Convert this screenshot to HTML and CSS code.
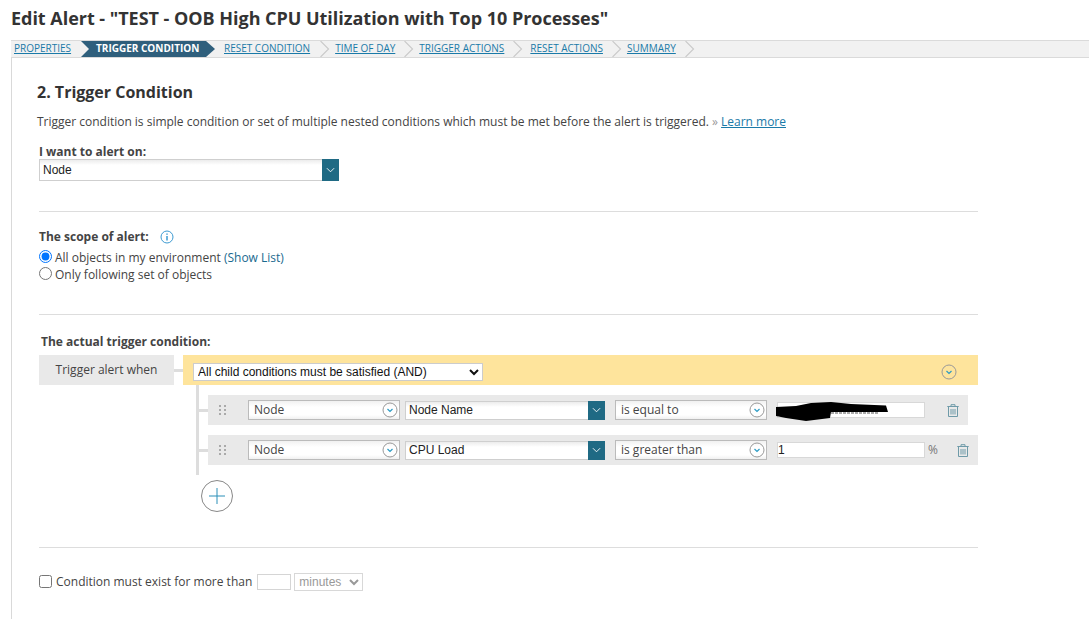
FILE: index.html
```html
<!DOCTYPE html>
<html lang="en">
<head>
<meta charset="utf-8">
<title>Edit Alert</title>
<link rel="stylesheet" href="styles.css">
</head>
<body>
<h1 class="title">Edit Alert - "TEST - OOB High CPU Utilization with Top 10 Processes"</h1>
<nav class="tabs">
  <a class="tab first">PROPERTIES</a>
  <span class="tab active">TRIGGER CONDITION</span>
  <a class="tab w-reset">RESET CONDITION</a><svg class="chev" viewBox="0 0 10 18"><path d="M0 0l9 9-9 9" /></svg>
  <a class="tab w-time">TIME OF DAY</a><svg class="chev" viewBox="0 0 10 18"><path d="M0 0l9 9-9 9" /></svg>
  <a class="tab w-ta">TRIGGER ACTIONS</a><svg class="chev" viewBox="0 0 10 18"><path d="M0 0l9 9-9 9" /></svg>
  <a class="tab w-ra">RESET ACTIONS</a><svg class="chev" viewBox="0 0 10 18"><path d="M0 0l9 9-9 9" /></svg>
  <a class="tab w-sum">SUMMARY</a><svg class="chev" viewBox="0 0 10 18"><path d="M0 0l9 9-9 9" /></svg>
</nav>
<main class="content">
  <h2 class="step">2. Trigger Condition</h2>
  <p class="desc">Trigger condition is simple condition or set of multiple nested conditions which must be met before the alert is triggered. <span class="raquo">»</span> <a class="link">Learn more</a></p>
  <div class="block">
    <label class="strong alert-label">I want to alert on:</label>
    <div class="combo combo-main"><span class="combo-text">Node</span><span class="combo-btn"><svg viewBox="0 0 10 6"><path d="M1 1l4 4 4-4"/></svg></span></div>
  </div>
  <hr class="rule rule-1">
  <div class="scope-head"><span class="strong">The scope of alert:</span>
    <svg class="info" viewBox="0 0 14 14"><circle cx="7" cy="7" r="6"/><path d="M7 6v4.5M7 3.4v1.4"/></svg>
  </div>
  <div class="radio-row"><input type="radio" name="scope" class="radio" checked><span>All objects in my environment <a class="show">(Show List)</a></span></div>
  <div class="radio-row"><input type="radio" name="scope" class="radio"><span>Only following set of objects</span></div>
  <hr class="rule rule-2">
  <div class="strong actual">The actual trigger condition:</div>
  <section class="builder">
    <div class="when-row">
      <div class="when">Trigger alert when</div>
      <div class="connector"></div>
      <div class="group-bar">
        <select class="and-select"><option>All child conditions must be satisfied (AND)</option></select>
        <svg class="circle-ico group-ico" viewBox="0 0 16 16"><circle cx="8" cy="8" r="7"/><path d="M5.5 7l2.5 2.5L10.500 7"/></svg>
      </div>
    </div>
    <div class="children">
      <div class="cond cond-short">
        <span class="branch"></span>
        <svg class="grip" viewBox="0 0 7 10"><path d="M0 0h2v2H0zM5 0h2v2H5zM0 4h2v2H0zM5 4h2v2H5zM0 8h2v2H0zM5 8h2v2H5z"/></svg>
        <div class="pick pick-obj"><span>Node</span><svg class="circle-ico" viewBox="0 0 16 16"><circle cx="8" cy="8" r="7"/><path d="M5.500 7l2.500 2.500L10.500 7"/></svg></div>
        <div class="combo combo-field"><span class="combo-text">Node Name</span><span class="combo-btn"><svg viewBox="0 0 10 6"><path d="M1 1l4 4 4-4"/></svg></span></div>
        <div class="pick pick-op"><span>is equal to</span><svg class="circle-ico" viewBox="0 0 16 16"><circle cx="8" cy="8" r="7"/><path d="M5.500 7l2.500 2.500L10.500 7"/></svg></div>
        <div class="value-wrap">
          <input class="value" type="text" value="">
          <svg class="blot" viewBox="0 0 112 19"><path class="blot-trace" d="M55 11H102"/><path d="M0 5L20 4L35 1L55 0L75 2L110 3.500L112 10L55 10L54 16L30 19L10 16L0 14Z"/></svg>
        </div>
        <svg class="trash trash-a" viewBox="0 0 12 13"><path d="M4 2V.7h4V2M.3 2.500h11.400M1.500 2.500v10h9v-10M4 5v5.500M6 5v5.500M8 5v5.500"/></svg>
      </div>
      <div class="cond">
        <span class="branch"></span>
        <svg class="grip" viewBox="0 0 7 10"><path d="M0 0h2v2H0zM5 0h2v2H5zM0 4h2v2H0zM5 4h2v2H5zM0 8h2v2H0zM5 8h2v2H5z"/></svg>
        <div class="pick pick-obj"><span>Node</span><svg class="circle-ico" viewBox="0 0 16 16"><circle cx="8" cy="8" r="7"/><path d="M5.500 7l2.500 2.500L10.500 7"/></svg></div>
        <div class="combo combo-field"><span class="combo-text">CPU Load</span><span class="combo-btn"><svg viewBox="0 0 10 6"><path d="M1 1l4 4 4-4"/></svg></span></div>
        <div class="pick pick-op"><span>is greater than</span><svg class="circle-ico" viewBox="0 0 16 16"><circle cx="8" cy="8" r="7"/><path d="M5.500 7l2.500 2.500L10.500 7"/></svg></div>
        <div class="value-wrap"><input class="value" type="text" value="1"></div>
        <span class="unit">%</span>
        <svg class="trash trash-b" viewBox="0 0 12 13"><path d="M4 2V.7h4V2M.3 2.500h11.400M1.500 2.500v10h9v-10M4 5v5.500M6 5v5.500M8 5v5.500"/></svg>
      </div>
    </div>
    <button class="add" type="button" aria-label="Add"><svg viewBox="0 0 16 16"><path d="M8 0v16M0 8h16"/></svg></button>
  </section>
  <hr class="rule rule-3">
  <div class="exist">
    <input type="checkbox" class="check">
    <span>Condition must exist for more than</span>
    <input type="text" class="mins" disabled>
    <select class="unit-select" disabled><option>minutes</option></select>
  </div>
</main>
</body>
</html>
```

FILE: styles.css
```css
* { box-sizing: border-box; }
html, body { margin: 0; height: 100%; overflow: hidden; background: #fff; }
body { font: 12px/16px "Open Sans", sans-serif; color: #444; }
.title { margin: 0; height: 40px; padding: 5px 0 0 11px; font: 700 18px/26px "Open Sans", sans-serif; letter-spacing: -0.03px; color: #333; white-space: nowrap; }
.tabs { display: flex; align-items: stretch; height: 18px; margin-left: 11px; background: #f1f1f1; border-top: 1px solid #dadada; border-bottom: 1px solid #dadada; font-size: 10px; line-height: 15px; }
.tab { display: block; color: #1a7aa8; text-decoration: underline; white-space: nowrap; }
.first { padding-left: 3px; width: 70px; }
.active { width: 134px; margin-right: 9px; padding-left: 15px; color: #fff; font-weight: 700; text-decoration: none; background: #2f5f7c; clip-path: polygon(0 0, 125px 0, 134px 50%, 125px 100%, 0 100%, 8px 50%); }
.w-reset { margin-right: 10px; }
.w-time { margin-left: 5px; margin-right: 9px; }
.w-ta { margin-left: 5px; margin-right: 9px; }
.w-ra { margin-left: 7px; margin-right: 9px; }
.w-sum { margin-left: 5px; margin-right: 9px; }
.chev { width: 10px; height: 16px; flex: none; }
.chev path { fill: none; stroke: #c8c8c8; stroke-width: 1.200; }
.content { margin-left: 11px; height: 561px; padding: 0 0 0 27px; border-left: 1px solid #d9d9d9; width: 967px; }
.step { height: 54px; margin: 0 0 0 -2px; padding-top: 23px; font: 700 16px/22px "Open Sans", sans-serif; color: #333; }
.desc { margin: 0 0 0 -2px; height: 21px; white-space: nowrap; font-size: 12px; line-height: 20px; letter-spacing: -0.01px; }
.raquo { color: #999; }
.link { color: #1a7aa8; text-decoration: underline; }
.strong { font-weight: 700; color: #444; }
.alert-label { display: block; height: 16px; line-height: 16px; margin-top: 11px; }
.combo { display: flex; align-items: center; height: 21px; background: linear-gradient(#ececec, #fff 5px); border: 1px solid #cfcfcf; border-right: 0; font: 12px "Liberation Sans", sans-serif; color: #222; }
.combo-main { width: 300px; height: 22px; margin-top: -1px; }
.combo-text { flex: 1; padding-left: 3px; }
.combo-btn { display: flex; align-items: center; justify-content: center; width: 17px; align-self: stretch; margin: -1px 0; background: #1f6a84; }
.combo-btn svg { width: 9px; height: 6px; }
.combo-btn path { fill: none; stroke: #fff; stroke-width: 1; }
.rule { height: 1px; margin: 0; border: 0; background: #ddd; width: 939px; }
.rule-1 { margin-top: 30px; }
.scope-head { display: flex; align-items: center; gap: 11px; margin-top: 17px; height: 16px; }
.info { width: 14px; height: 14px; }
.info circle { fill: none; stroke: #3d9bd2; stroke-width: 1; }
.info path { fill: none; stroke: #3d9bd2; stroke-width: 1.500; }
.radio-row { display: flex; align-items: center; height: 17px; white-space: nowrap; }
.scope-head + .radio-row { margin-top: 4px; }
.radio { margin: 0 3px 0 0; width: 13px; height: 13px; position: relative; top: -1px; }
.show { color: #1a6a8f; }
.rule-2 { margin-top: 31px; }
.actual { margin: 19px 0 0 2px; height: 21px; line-height: 16px; }
.builder { width: 939px; }
.when-row { display: flex; align-items: stretch; height: 30px; }
.when { width: 135px; background: #e9e9e9; text-align: center; line-height: 30px; }
.connector { width: 9px; height: 3px; align-self: center; background: #ddd; }
.group-bar { flex: 1; display: flex; align-items: center; justify-content: space-between; padding: 3px 21px 0 10px; background: #fee49c; }
.and-select { width: 290px; height: 18px; padding: 0; border: 1px solid #ccc; background: #fff; font: 12px "Liberation Sans", sans-serif; color: #111; }
.circle-ico { width: 16px; height: 16px; flex: none; }
.circle-ico circle { fill: #fff0; stroke: #999; stroke-width: 1; }
.circle-ico path { fill: none; stroke: #2a9bc4; stroke-width: 1.200; }
.children { margin-left: 157px; width: 782px; padding: 10px 0; border-left: 3px solid #ddd; display: flex; flex-direction: column; gap: 10px; height: 90px; }
.cond { position: relative; display: flex; align-items: center; height: 30px; margin-left: 9px; width: 770px; background: #e9e9e9; padding-left: 11px; }
.cond-short { width: 760px; }
.branch { position: absolute; left: -9px; top: 14px; width: 9px; height: 3px; background: #ddd; }
.grip { width: 7px; height: 10px; flex: none; }
.grip path { fill: #aaa; }
.pick { display: flex; align-items: center; justify-content: space-between; height: 20px; margin-left: 22px; padding: 0 1px 0 5px; border: 1px solid #bbb; background: linear-gradient(#f1f1f1, #fff 6px, #fff 14px, #f1f1f1); color: #444; }
.pick-obj { width: 152px; }
.pick-op { width: 152px; margin-left: 10px; }
.combo-field { width: 200px; height: 19px; margin-left: 5px; }
.value-wrap { position: relative; margin-left: 10px; width: 148px; height: 16px; }
.value { display: block; width: 100%; height: 16px; padding: 0; border: 1px solid #d8d8d8; background: #fff; font: 12px "Liberation Sans", sans-serif; color: #222; }
.blot { position: absolute; left: -1px; top: 0; width: 112px; height: 19px; }
.blot path { fill: #000; }
.blot .blot-trace { fill: none; stroke: #aaa; stroke-width: 2; stroke-dasharray: 3 1; }
.unit { width: 10px; margin-left: 3px; color: #777; }
.trash { width: 12px; height: 13px; flex: none; }
.trash path { fill: none; stroke: #6e9aa8; stroke-width: 1; }
.trash-a { margin-left: 22px; }
.trash-b { margin-left: 19px; }
.add { display: flex; align-items: center; justify-content: center; width: 32px; height: 32px; margin: 5px 0 0 162px; padding: 0; border: 1px solid #888; border-radius: 50%; background: #fff; }
.add svg { width: 16px; height: 16px; }
.add path { fill: none; stroke: #2a8fb8; stroke-width: 1; }
.rule-3 { margin-top: 35px; }
.exist { display: flex; align-items: center; margin-top: 25px; height: 18px; white-space: nowrap; }
.check { width: 13px; height: 13px; margin: 0 4px 0 0; position: relative; top: -1px; }
.mins { width: 34px; height: 16px; margin: 0 3px 0 5px; border: 1px solid #d5d5d5; background: #fff; padding: 0; }
.unit-select { width: 69px; height: 18px; padding: 0; border: 1px solid #d8d8d8; background: #fff; color: #999; font: 12px "Liberation Sans", sans-serif; opacity: 1; }
```
